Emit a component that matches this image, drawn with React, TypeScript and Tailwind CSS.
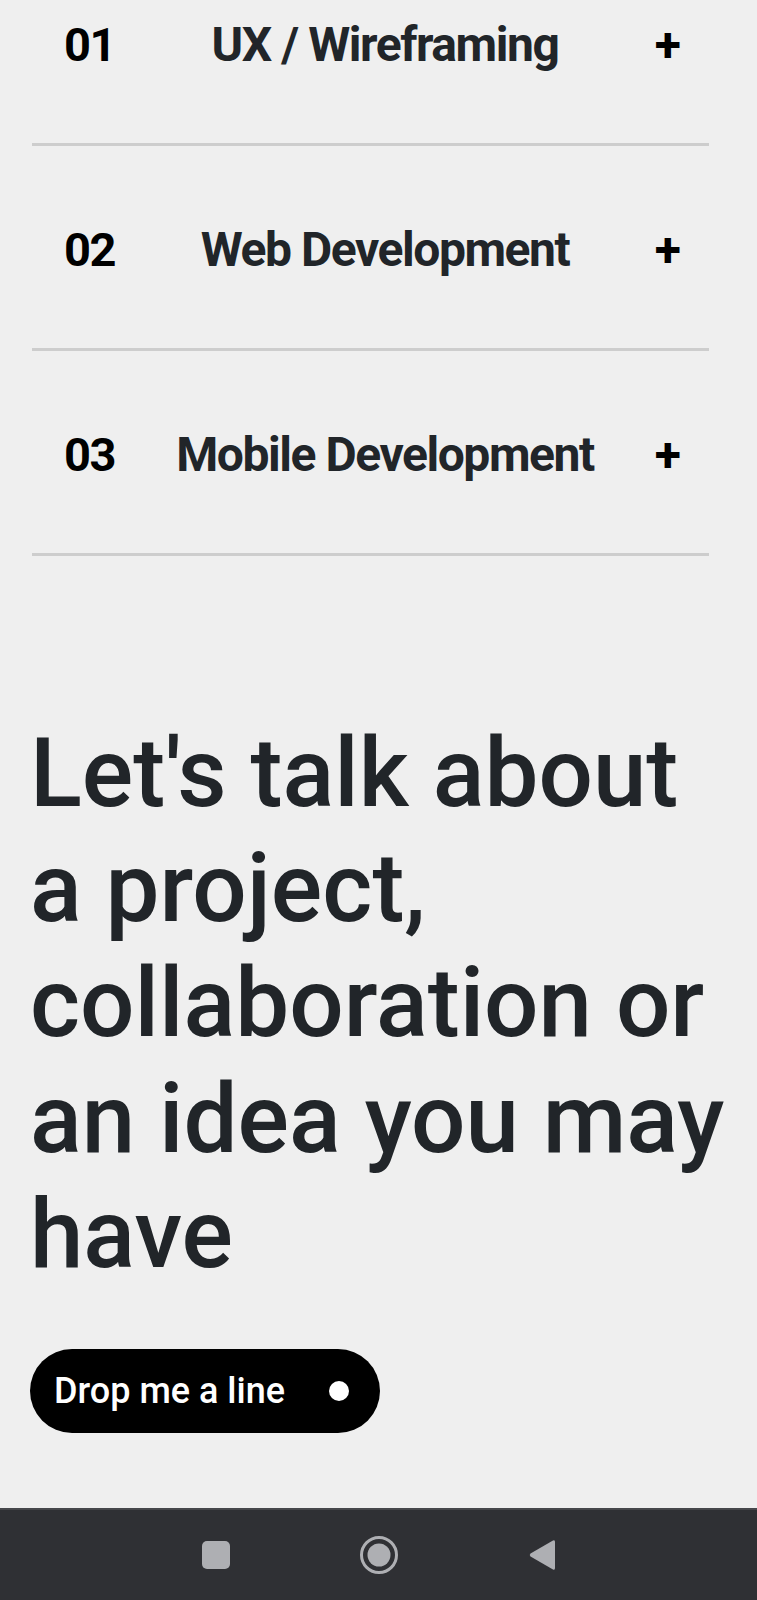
const services = [
  { num: "01", title: "UX / Wireframing" },
  { num: "02", title: "Web Development" },
  { num: "03", title: "Mobile Development" },
];

function ServiceRow({ num, title }: { num: string; title: string }) {
  return (
    <div className="flex h-[205px] items-center justify-between border-b-[3px] border-[#cdcdcd] pt-[5px] pr-[28px] pl-8">
      <span className="text-[47px] font-bold leading-none tracking-[-0.03em] text-black">{num}</span>
      <span className="text-[48px] font-bold leading-none tracking-[-0.03em] text-[#212529]">{title}</span>
      <span className="text-[48px] font-bold leading-none text-black">+</span>
    </div>
  );
}

function NavBar() {
  return (
    <nav className="flex h-[92px] items-center justify-center border-t-2 border-[#46474b] bg-[#2f3034]">
      <div className="flex w-[163px] justify-center">
        <div className="h-[28px] w-[28px] rounded-[5px] bg-[#aeafb3]" />
      </div>
      <div className="flex w-[163px] justify-center">
        <svg width="40" height="40" viewBox="0 0 40 40">
          <circle cx="20" cy="20" r="17.5" fill="none" stroke="#aeafb3" strokeWidth="3" />
          <circle cx="20" cy="20" r="11.5" fill="#aeafb3" />
        </svg>
      </div>
      <div className="flex w-[163px] justify-center">
        <svg width="28" height="34" viewBox="0 0 28 34">
          <path d="M25 2.5 Q27 1.5 27 4 L27 30 Q27 32.5 25 31.5 L2.5 18.5 Q1 17 2.5 15.5 Z" fill="#aeafb3" />
        </svg>
      </div>
    </nav>
  );
}

export default function App() {
  return (
    <div className="flex min-h-[1600px] flex-col bg-[#efefef] font-['Roboto',sans-serif]">
      <main className="h-[1508px] overflow-hidden">
        <div className="-mt-[59px] mr-12 ml-8">
          {services.map((service) => (
            <ServiceRow key={service.num} num={service.num} title={service.title} />
          ))}
        </div>

        <h1 className="mt-[160px] pr-4 pl-[30px] text-[96px] font-medium leading-[1.2] text-[#212529]">
          Let's talk about a project, collaboration or an idea you may have
        </h1>

        <button
          type="button"
          className="mt-[57px] ml-[30px] flex h-[84px] items-center gap-[44px] rounded-full bg-black pr-[31px] pl-[24px] text-[36px] font-medium text-white"
        >
          <span>Drop me a line</span>
          <span className="h-5 w-5 rounded-full bg-white" />
        </button>
      </main>
      <NavBar />
    </div>
  );
}
